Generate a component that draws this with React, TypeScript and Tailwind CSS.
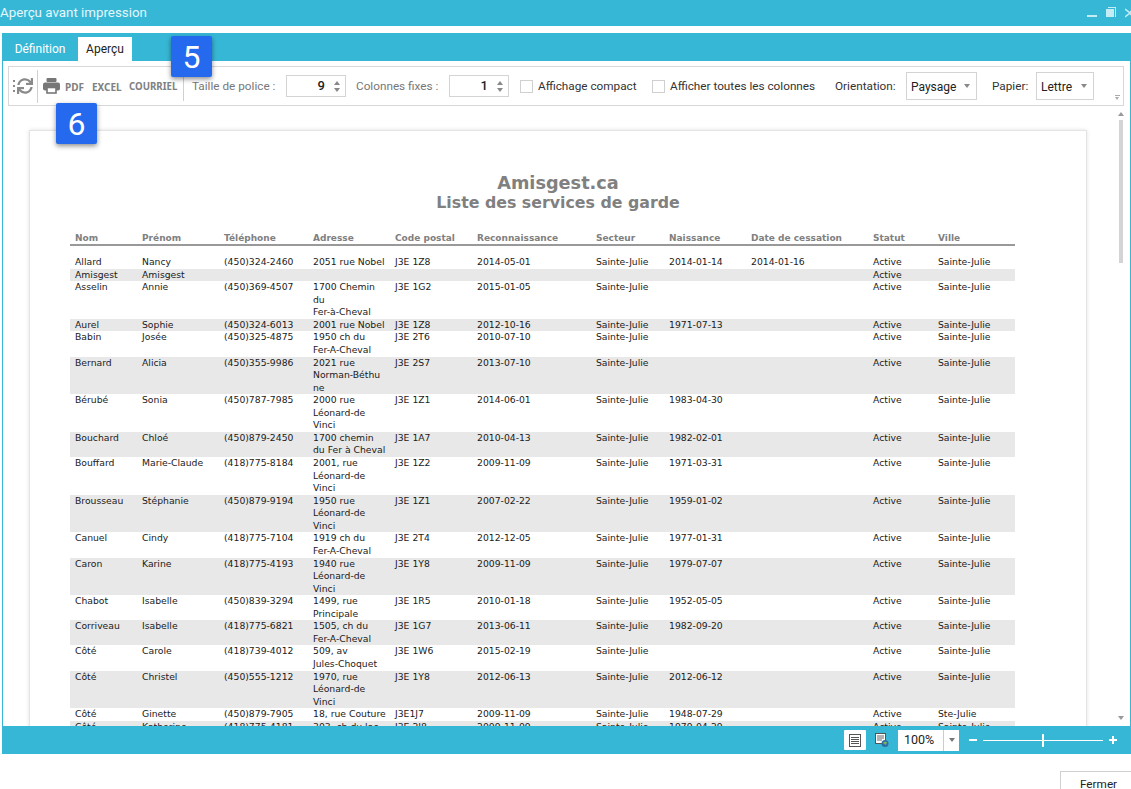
import { FaSync } from 'react-icons/fa';

type Row = {
  nom: string;
  prenom: string;
  tel?: string;
  adresse?: string[];
  code?: string;
  recon?: string;
  secteur?: string;
  naissance?: string;
  cessation?: string;
  ville?: string;
};

const SJ = 'Sainte-Julie';

const rows: Row[] = [
  { nom: 'Allard', prenom: 'Nancy', tel: '(450)324-2460', adresse: ['2051 rue Nobel'], code: 'J3E 1Z8', recon: '2014-05-01', secteur: SJ, naissance: '2014-01-14', cessation: '2014-01-16', ville: SJ },
  { nom: 'Amisgest', prenom: 'Amisgest' },
  { nom: 'Asselin', prenom: 'Annie', tel: '(450)369-4507', adresse: ['1700 Chemin', 'du', 'Fer-à-Cheval'], code: 'J3E 1G2', recon: '2015-01-05', secteur: SJ, ville: SJ },
  { nom: 'Aurel', prenom: 'Sophie', tel: '(450)324-6013', adresse: ['2001 rue Nobel'], code: 'J3E 1Z8', recon: '2012-10-16', secteur: SJ, naissance: '1971-07-13', ville: SJ },
  { nom: 'Babin', prenom: 'Josée', tel: '(450)325-4875', adresse: ['1950 ch du', 'Fer-A-Cheval'], code: 'J3E 2T6', recon: '2010-07-10', secteur: SJ, ville: SJ },
  { nom: 'Bernard', prenom: 'Alicia', tel: '(450)355-9986', adresse: ['2021 rue', 'Norman-Béthu', 'ne'], code: 'J3E 2S7', recon: '2013-07-10', secteur: SJ, ville: SJ },
  { nom: 'Bérubé', prenom: 'Sonia', tel: '(450)787-7985', adresse: ['2000 rue', 'Léonard-de', 'Vinci'], code: 'J3E 1Z1', recon: '2014-06-01', secteur: SJ, naissance: '1983-04-30', ville: SJ },
  { nom: 'Bouchard', prenom: 'Chloé', tel: '(450)879-2450', adresse: ['1700 chemin', 'du Fer à Cheval'], code: 'J3E 1A7', recon: '2010-04-13', secteur: SJ, naissance: '1982-02-01', ville: SJ },
  { nom: 'Bouffard', prenom: 'Marie-Claude', tel: '(418)775-8184', adresse: ['2001, rue', 'Léonard-de', 'Vinci'], code: 'J3E 1Z2', recon: '2009-11-09', secteur: SJ, naissance: '1971-03-31', ville: SJ },
  { nom: 'Brousseau', prenom: 'Stéphanie', tel: '(450)879-9194', adresse: ['1950 rue', 'Léonard-de', 'Vinci'], code: 'J3E 1Z1', recon: '2007-02-22', secteur: SJ, naissance: '1959-01-02', ville: SJ },
  { nom: 'Canuel', prenom: 'Cindy', tel: '(418)775-7104', adresse: ['1919 ch du', 'Fer-A-Cheval'], code: 'J3E 2T4', recon: '2012-12-05', secteur: SJ, naissance: '1977-01-31', ville: SJ },
  { nom: 'Caron', prenom: 'Karine', tel: '(418)775-4193', adresse: ['1940 rue', 'Léonard-de', 'Vinci'], code: 'J3E 1Y8', recon: '2009-11-09', secteur: SJ, naissance: '1979-07-07', ville: SJ },
  { nom: 'Chabot', prenom: 'Isabelle', tel: '(450)839-3294', adresse: ['1499, rue', 'Principale'], code: 'J3E 1R5', recon: '2010-01-18', secteur: SJ, naissance: '1952-05-05', ville: SJ },
  { nom: 'Corriveau', prenom: 'Isabelle', tel: '(418)775-6821', adresse: ['1505, ch du', 'Fer-A-Cheval'], code: 'J3E 1G7', recon: '2013-06-11', secteur: SJ, naissance: '1982-09-20', ville: SJ },
  { nom: 'Côté', prenom: 'Carole', tel: '(418)739-4012', adresse: ['509, av', 'Jules-Choquet'], code: 'J3E 1W6', recon: '2015-02-19', secteur: SJ, ville: SJ },
  { nom: 'Côté', prenom: 'Christel', tel: '(450)555-1212', adresse: ['1970, rue', 'Léonard-de', 'Vinci'], code: 'J3E 1Y8', recon: '2012-06-13', secteur: SJ, naissance: '2012-06-12', ville: SJ },
  { nom: 'Côté', prenom: 'Ginette', tel: '(450)879-7905', adresse: ['18, rue Couture'], code: 'J3E1J7', recon: '2009-11-09', secteur: SJ, naissance: '1948-07-29', ville: 'Ste-Julie' },
  { nom: 'Côté', prenom: 'Katherine', tel: '(418)775-4181', adresse: ['303, ch du lac'], code: 'J3E 2J8', recon: '2009-11-09', secteur: SJ, naissance: '1979-04-29', ville: SJ },
];

const headers = ['Nom', 'Prénom', 'Téléphone', 'Adresse', 'Code postal', 'Reconnaissance', 'Secteur', 'Naissance', 'Date de cessation', 'Statut', 'Ville'];

const gridCols = 'grid grid-cols-[67px_82px_89px_82px_82px_119px_73px_82px_122px_65px_82px]';

function Spinner({ value }: { value: string }) {
  return (
    <div className="flex h-[22px] w-[60px] items-center justify-end border border-[#d4d4d4] bg-white">
      <span className="text-[13px] font-medium text-[#222]">{value}</span>
      <div className="ml-[9px] mr-[5px] flex flex-col gap-[3px]">
        <div className="h-0 w-0 border-x-[3.5px] border-b-[4px] border-x-transparent border-b-[#888]" />
        <div className="h-0 w-0 border-x-[3.5px] border-t-[4px] border-x-transparent border-t-[#888]" />
      </div>
    </div>
  );
}

function Combo({ value, className }: { value: string; className: string }) {
  return (
    <div className={`flex h-[28px] items-center justify-between border border-[#d4d4d4] bg-white pl-[4px] pr-[6px] ${className}`}>
      <span className="mt-[2px] text-[12px] text-[#222]">{value}</span>
      <div className="h-0 w-0 border-x-[3.5px] border-t-[4px] border-x-transparent border-t-[#888]" />
    </div>
  );
}

function Badge({ n, className }: { n: string; className: string }) {
  return (
    <div className={`absolute z-10 flex h-[41px] w-[41px] items-center justify-center rounded-[2px] bg-[#2469ee] text-[32px] leading-none text-white shadow-[0_2px_5px_rgba(0,0,0,0.45)] ${className}`}>
      {n}
    </div>
  );
}

function RefreshIcon() {
  return (
    <div className="flex h-[17px] w-[21px] items-center">
      <div className="flex h-[12px] w-[4px] shrink-0 flex-col justify-between">
        <div className="h-[2px] w-[2px] bg-[#8a8a8a]" />
        <div className="h-[2px] w-[2px] bg-[#8a8a8a]" />
        <div className="h-[2px] w-[2px] bg-[#8a8a8a]" />
      </div>
      <FaSync size={16} color="#8a8a8a" />
    </div>
  );
}

function PrinterIcon() {
  return (
    <svg width="17" height="16" viewBox="0 0 17 16" className="shrink-0">
      <rect x="3.5" y="0" width="10" height="4" rx="1" fill="#777" />
      <rect x="0" y="4.5" width="17" height="8" rx="2" fill="#777" />
      <rect x="4" y="9.5" width="9" height="5.5" fill="#fff" stroke="#777" strokeWidth="1.6" />
    </svg>
  );
}

function PageViewIcon() {
  return (
    <svg width="12" height="13" viewBox="0 0 12 13" fill="none" stroke="#555">
      <rect x="0.5" y="0.5" width="11" height="12" />
      <path d="M2 3.5h8M2 5.5h8M2 7.5h8M2 9.5h8" />
    </svg>
  );
}

function WebViewIcon() {
  return (
    <svg width="14" height="14" viewBox="0 0 14 14" fill="none">
      <rect x="0.5" y="0.5" width="10" height="10" fill="#fff" stroke="#555" />
      <path d="M2 3h7M2 5h7M2 7h5" stroke="#666" />
      <circle cx="10" cy="10.5" r="3.5" fill="#2f6ea5" />
      <path d="M8 10a3 2 0 0 1 4-1l-1 3z" fill="#7fb35a" />
    </svg>
  );
}

export default function App() {
  return (
    <div className="relative h-[789px] w-[1131px] overflow-hidden bg-white font-['Roboto',sans-serif]">
      {/* barre de titre */}
      <div className="flex h-[26px] items-center justify-between bg-[#37b7d6]">
        <span className="text-[13.33px] text-[#e6f6fa]">Aperçu avant impression</span>
        <div className="flex items-center">
          <div className="mt-[6px] h-[2px] w-[10px] bg-[#c5ecf5]" />
          <div className="relative ml-[9px] h-[8px] w-[8px] bg-[#c5ecf5]">
            <div className="absolute left-[2px] top-[-2px] h-[10px] w-[8px] border-r border-t border-[#c5ecf5]" />
          </div>
          <svg width="6" height="10" viewBox="0 0 6 10" className="ml-[11px]">
            <path d="M0 1l5 4-5 4M5 5L8 1M5 5l3 4" stroke="#c5ecf5" strokeWidth="1.6" fill="none" />
          </svg>
        </div>
      </div>

      <div className="ml-[2px] mt-[7px] flex h-[721px] flex-col border-x border-[#37b7d6]">
        {/* onglets */}
        <div className="flex h-[28px] items-end bg-[#37b7d6] pl-[2px]">
          <div className="flex h-[24px] w-[70px] items-center justify-center text-[12px] text-white">Définition</div>
          <div className="ml-[3px] flex h-[24px] w-[54px] items-center justify-center bg-white text-[12px] text-[#222]">Aperçu</div>
        </div>

        {/* barre d'outils */}
        <div className="ml-[5px] mt-[5px] flex h-[40px] w-[1116px] shrink-0 items-center border border-[#d8d8d8] text-[11.75px]">
          <div className="ml-[4px]"><RefreshIcon /></div>
          <div className="ml-[3px] h-[33px] w-px bg-[#d0d0d0]" />
          <div className="ml-[5px]"><PrinterIcon /></div>
          <span className="ml-[5px] mt-[2px] w-[27px] font-['Noto_Sans',sans-serif] text-[10px] font-bold text-[#808080]">PDF</span>
          <span className="mt-[2px] w-[37px] font-['Noto_Sans',sans-serif] text-[10px] font-bold text-[#808080]">EXCEL</span>
          <span className="mt-[2px] w-[54px] font-['Noto_Sans',sans-serif] text-[9.7px] font-bold text-[#808080]">COURRIEL</span>
          <div className="h-[30px] w-px bg-[#d0d0d0]" />
          <span className="ml-[8px] mt-[2px] w-[94px] text-[#777]">Taille de police :</span>
          <Spinner value="9" />
          <span className="ml-[10px] mt-[2px] w-[93px] text-[#777]">Colonnes fixes :</span>
          <Spinner value="1" />
          <div className="ml-[11px] h-[13px] w-[13px] border border-[#d0d0d0]" />
          <span className="ml-[5px] mt-[2px] w-[114px] text-[#333]">Affichage compact</span>
          <div className="h-[13px] w-[13px] border border-[#d0d0d0]" />
          <span className="ml-[5px] mt-[2px] w-[165px] text-[#333]">Afficher toutes les colonnes</span>
          <span className="mt-[2px] w-[71px] text-[#333]">Orientation:</span>
          <Combo value="Paysage" className="w-[71px]" />
          <span className="ml-[15px] mt-[2px] w-[44px] text-[#333]">Papier:</span>
          <Combo value="Lettre" className="w-[58px]" />
          <div className="ml-[21px] mt-[22px] flex flex-col gap-px">
            <div className="h-px w-[5px] bg-[#aaa]" />
            <div className="h-0 w-0 border-x-[2.5px] border-t-[3px] border-x-transparent border-t-[#aaa]" />
          </div>
        </div>

        {/* zone d'aperçu */}
        <div className="flex min-h-0 flex-1">
          <div className="min-w-0 flex-1 overflow-hidden pl-[26px] pt-[24px]">
            <div className="h-[800px] w-[1058px] border border-[#e4e4e4] pt-[42px] shadow-[0_0_4px_rgba(0,0,0,0.12)] font-['DejaVu_Sans',sans-serif]">
              <div className="text-center font-bold leading-[20px] text-[#808080]">
                <div className="text-[17.7px]">Amisgest.ca</div>
                <div className="text-[15.8px]">Liste des services de garde</div>
              </div>
              <div className={`${gridCols} ml-[40px] mt-[18px] w-[945px] border-b-2 border-[#999] pt-[1px] text-[9px] font-bold leading-[12px] text-[#808080]`}>
                {headers.map(h => (
                  <div key={h} className="pl-[5px] whitespace-nowrap">{h}</div>
                ))}
              </div>
              <div className="ml-[40px] mt-[10px] w-[945px] text-[9.25px] leading-[12.57px] text-[#1a1a1a]">
                {rows.map((row, i) => (
                  <div key={i} className={`${gridCols} ${i % 2 === 1 ? 'bg-[#e8e8e8]' : ''}`}>
                    <div className="pl-[5px]">{row.nom}</div>
                    <div className="pl-[5px]">{row.prenom}</div>
                    <div className="pl-[5px]">{row.tel}</div>
                    <div className="pl-[5px] whitespace-nowrap">
                      {row.adresse?.map(line => <div key={line}>{line}</div>)}
                    </div>
                    <div className="pl-[5px]">{row.code}</div>
                    <div className="pl-[5px]">{row.recon}</div>
                    <div className="pl-[5px]">{row.secteur}</div>
                    <div className="pl-[5px]">{row.naissance}</div>
                    <div className="pl-[5px]">{row.cessation}</div>
                    <div className="pl-[5px]">Active</div>
                    <div className="pl-[5px]">{row.ville}</div>
                  </div>
                ))}
              </div>
            </div>
          </div>

          {/* barre de défilement */}
          <div className="mr-[5px] flex w-[8px] shrink-0 flex-col items-center pt-[6px]">
            <div className="h-0 w-0 border-x-[3px] border-b-[4px] border-x-transparent border-b-[#999]" />
            <div className="mt-[4px] h-[143px] w-[4px] bg-[#d4d4d4]" />
            <div className="mb-[6px] mt-auto h-0 w-0 border-x-[3px] border-t-[4px] border-x-transparent border-t-[#999]" />
          </div>
        </div>

        {/* barre du bas */}
        <div className="flex h-[28px] shrink-0 items-center bg-[#37b7d6]">
          <div className="ml-[841px] flex h-[20px] w-[22px] items-center justify-center rounded-[1px] bg-white">
            <PageViewIcon />
          </div>
          <div className="ml-[9px]"><WebViewIcon /></div>
          <div className="ml-[9px] flex h-[21px] w-[61px] items-center bg-white">
            <span className="w-[45px] pl-[6px] text-[12.5px] text-[#222]">100%</span>
            <div className="flex h-full flex-1 items-center justify-center border-l border-[#ccc]">
              <div className="h-0 w-0 border-x-[3px] border-t-[4px] border-x-transparent border-t-[#777]" />
            </div>
          </div>
          <div className="ml-[10px] h-[2px] w-[8px] bg-white" />
          <div className="relative ml-[6px] h-px w-[120px] bg-white">
            <div className="absolute left-[59px] top-[-6px] h-[13px] w-[2px] bg-white" />
          </div>
          <div className="relative ml-[6px] h-[2px] w-[8px] bg-white">
            <div className="absolute left-[3px] top-[-3px] h-[8px] w-[2px] bg-white" />
          </div>
        </div>
      </div>

      {/* pied */}
      <div className="ml-[1060px] mt-[17px] h-[18px] w-[71px] border-l border-t border-[#d0d0d0] pl-[19px] pt-[6px] text-[11.75px] leading-[12px] text-[#222]">
        Fermer
      </div>

      <Badge n="5" className="left-[171px] top-[36px]" />
      <Badge n="6" className="left-[56px] top-[103px]" />
    </div>
  );
}
